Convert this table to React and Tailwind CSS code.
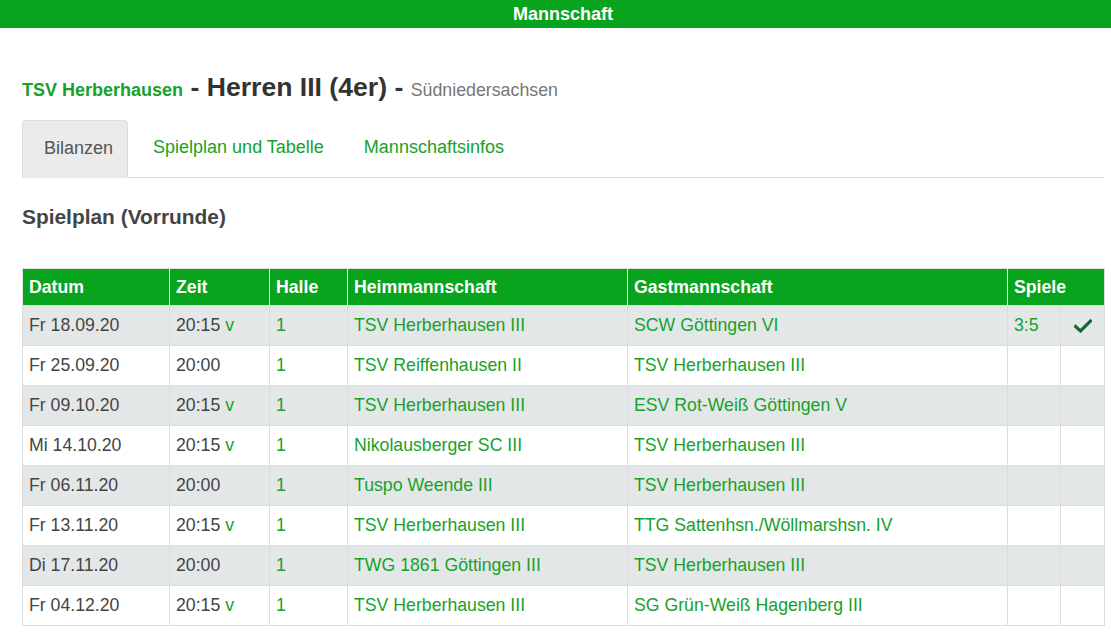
import React from "react";

const rows = [
  ["Fr 18.09.20", "20:15", true, "1", "TSV Herberhausen III", "SCW Göttingen VI", "3:5", true],
  ["Fr 25.09.20", "20:00", false, "1", "TSV Reiffenhausen II", "TSV Herberhausen III", "", false],
  ["Fr 09.10.20", "20:15", true, "1", "TSV Herberhausen III", "ESV Rot-Weiß Göttingen V", "", false],
  ["Mi 14.10.20", "20:15", true, "1", "Nikolausberger SC III", "TSV Herberhausen III", "", false],
  ["Fr 06.11.20", "20:00", false, "1", "Tuspo Weende III", "TSV Herberhausen III", "", false],
  ["Fr 13.11.20", "20:15", true, "1", "TSV Herberhausen III", "TTG Sattenhsn./Wöllmarshsn. IV", "", false],
  ["Di 17.11.20", "20:00", false, "1", "TWG 1861 Göttingen III", "TSV Herberhausen III", "", false],
  ["Fr 04.12.20", "20:15", true, "1", "TSV Herberhausen III", "SG Grün-Weiß Hagenberg III", "", false],
];

function Check() {
  return (
    <svg width="18" height="14" viewBox="0 0 18 14" className="inline-block">
      <path d="M1.5 7.5 L6.5 12 L16.5 2" fill="none" stroke="#126b3a" strokeWidth="3.2" strokeLinecap="square" />
    </svg>
  );
}

export default function App() {
  const td = "border border-[#dddddd] px-[6px] pt-[7px] pb-[7px] align-top h-[39px]";
  return (
    <div className="w-[1111px] h-[634px] bg-white overflow-hidden text-[17.7px] leading-[25px] text-[#444]" style={{ fontFamily: '"Liberation Sans", Arial, sans-serif' }}>
      <div className="h-[28px] bg-[#09a41d] flex items-center justify-center pl-[15px] text-white font-bold text-[18px]">
        Mannschaft
      </div>
      <div className="px-[22px] pr-[7px]">
        <div className="mt-[47px] flex items-baseline whitespace-pre h-[34px]">
          <span className="text-[#17a12a] font-bold text-[18px]">TSV Herberhausen</span>
          <span className="text-[#333] font-bold text-[26.6px]"> - Herren III (4er) - </span>
          <span className="text-[#777] text-[17.8px]">Südniedersachsen</span>
        </div>
        <div className="mt-[11px] flex border-b border-[#dddddd] h-[58px] text-[18px]">
          <div className="bg-[#ebebeb] border border-[#dddddd] border-b-0 rounded-t-[4px] pl-[21px] pr-[14px] pt-[15px] text-[#555] -mb-px h-[58px]">
            Bilanzen
          </div>
          <div className="pl-[25px] pr-[20px] pt-[15px] text-[#17a12a]">Spielplan und Tabelle</div>
          <div className="pl-[20px] pt-[15px] text-[#17a12a]">Mannschaftsinfos</div>
        </div>
        <h2 className="mt-[26px] font-bold text-[20.9px] leading-[26px] text-[#444]">Spielplan (Vorrunde)</h2>
        <table className="mt-[38px] w-[1082px] table-fixed border-collapse border border-[#dddddd]">
          <colgroup>
            <col className="w-[147px]" />
            <col className="w-[100px]" />
            <col className="w-[78px]" />
            <col className="w-[280px]" />
            <col className="w-[380px]" />
            <col className="w-[53px]" />
            <col className="w-[44px]" />
          </colgroup>
          <thead>
            <tr className="bg-[#09a41d] text-white font-bold h-[37px]">
              <th className="text-left font-bold px-[6px] border-r border-[#e6f4e8]">Datum</th>
              <th className="text-left font-bold px-[6px] border-r border-[#e6f4e8]">Zeit</th>
              <th className="text-left font-bold px-[6px] border-r border-[#e6f4e8]">Halle</th>
              <th className="text-left font-bold px-[6px] border-r border-[#e6f4e8]">Heimmannschaft</th>
              <th className="text-left font-bold px-[6px] border-r border-[#e6f4e8]">Gastmannschaft</th>
              <th colSpan={2} className="text-left font-bold px-[6px]">Spiele</th>
            </tr>
          </thead>
          <tbody>
            {rows.map((r, i) => (
              <tr key={i} className={i % 2 === 0 ? "bg-[#e4e7e8]" : "bg-white"}>
                <td className={td}>{r[0]}</td>
                <td className={td}>
                  {r[1]}
                  {r[2] && <span className="text-[#17a12a]"> v</span>}
                </td>
                <td className={td + " text-[#17a12a]"}>{r[3]}</td>
                <td className={td + " text-[#17a12a] whitespace-nowrap"}>{r[4]}</td>
                <td className={td + " text-[#17a12a] whitespace-nowrap"}>{r[5]}</td>
                <td className={td + " text-[#17a12a]"}>{r[6]}</td>
                <td className={td + " text-center"}>{r[7] && <Check />}</td>
              </tr>
            ))}
          </tbody>
        </table>
      </div>
    </div>
  );
}
